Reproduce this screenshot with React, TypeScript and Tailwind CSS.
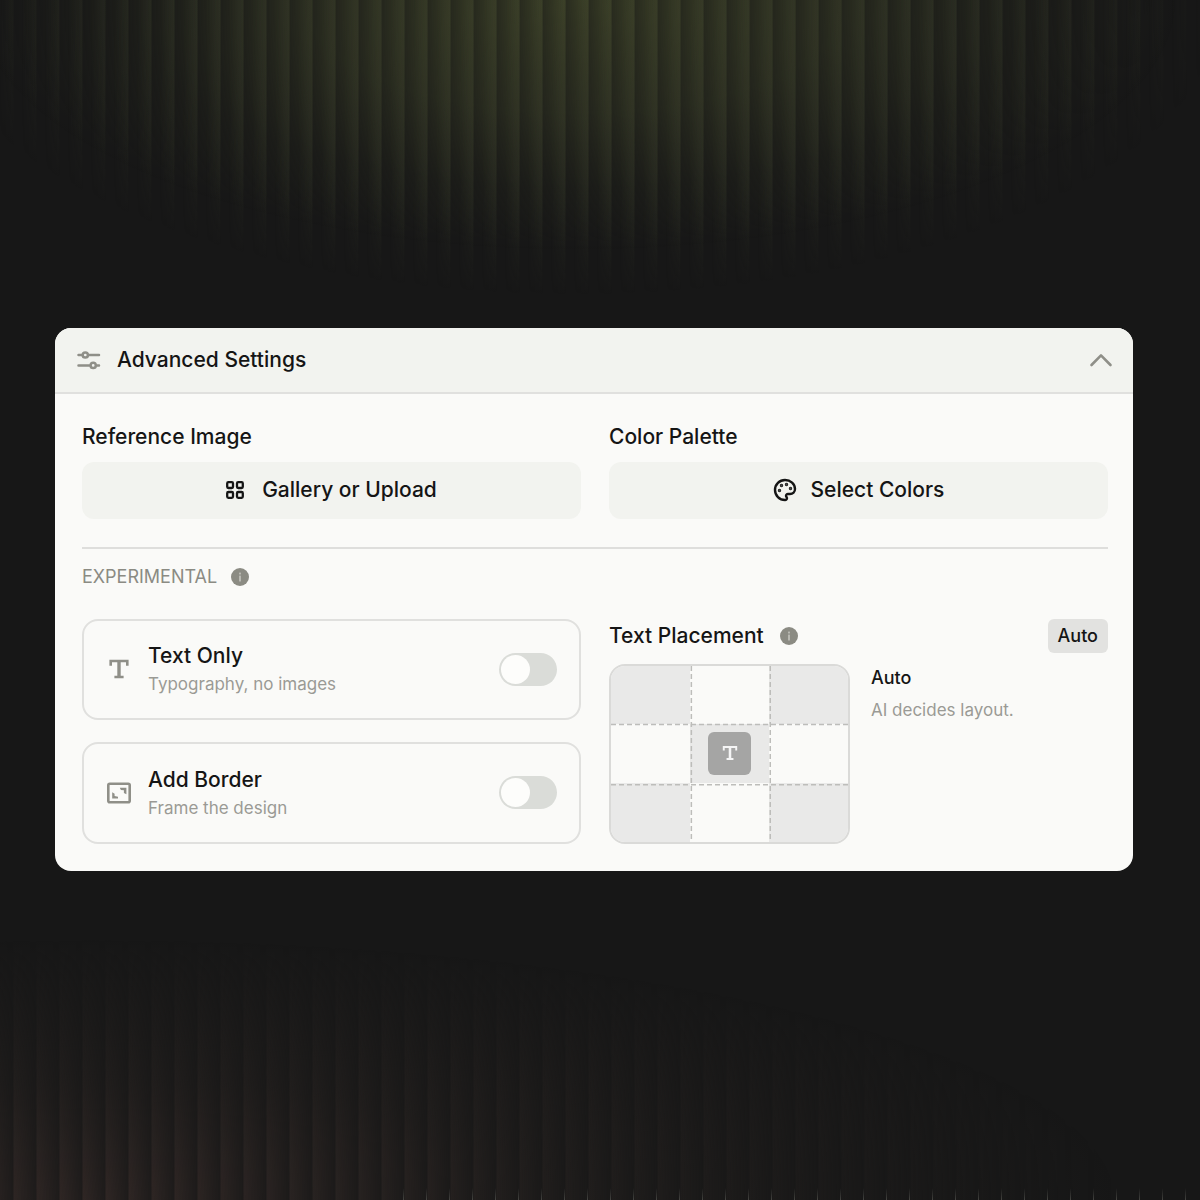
import React, { useState } from "react";
import { Palette } from "lucide-react";

const SlidersIcon = () => (
  <svg className="size-6 shrink-0" viewBox="0 0 24 24" fill="none" stroke="currentColor" strokeWidth="2.5" strokeLinecap="round">
    <path d="M1.500 7h3.600M11.500 7H22" />
    <circle cx="8.300" cy="7" r="2.600" />
    <path d="M1.500 17.4h11M20 17.4h2" />
    <circle cx="16.200" cy="17.4" r="2.600" />
  </svg>
);

const ChevronUpIcon = () => (
  <svg className="size-6 shrink-0" viewBox="0 0 24 24" fill="none" stroke="currentColor" strokeWidth="2.6" strokeLinecap="round" strokeLinejoin="round">
    <path d="M2.500 17 12 7.400 21.500 17" />
  </svg>
);

const GridIcon = () => (
  <svg className="size-[18px] shrink-0" viewBox="0 0 18 18" fill="none" stroke="currentColor" strokeWidth="2.300">
    <rect x="1.200" y="1.200" width="5.800" height="5.800" rx="1.200" />
    <rect x="11" y="1.200" width="5.800" height="5.800" rx="1.200" />
    <rect x="1.200" y="11" width="5.800" height="5.800" rx="1.200" />
    <rect x="11" y="11" width="5.800" height="5.800" rx="1.200" />
  </svg>
);

const InfoIcon = () => (
  <svg className="size-[18px] shrink-0 text-[#8b8b83]" viewBox="0 0 18 18">
    <circle cx="9" cy="9" r="9" fill="currentColor" />
    <rect x="8" y="7.600" width="2" height="6" rx="0.500" fill="#b9b9b2" />
    <rect x="8" y="4.400" width="2" height="2" rx="0.500" fill="#b9b9b2" />
  </svg>
);

const TypeIcon = ({ className }: { className: string }) => (
  <svg className={className} viewBox="0 0 24 24" fill="none" stroke="currentColor">
    <path strokeWidth="2.600" d="M3.700 8.800V4h16.600v4.800M7.400 20h9.200" />
    <path strokeWidth="3.400" d="M12 4v16" />
  </svg>
);

const FrameIcon = () => (
  <svg className="h-[22px] w-6" viewBox="0 0 24 22" fill="none">
    <rect x="1.300" y="1.800" width="21.400" height="18.400" rx="1.500" stroke="currentColor" strokeWidth="2.600" />
    <path d="M12.800 5.800h6.600v6.400l-2.500-1.200V8.300l-3-.4zM5.200 10.200l2.400 1.600v2.300l3.400.6v1.800H5.200z" fill="currentColor" />
  </svg>
);

type OptionCardProps = {
  id: string;
  icon: React.ReactNode;
  title: string;
  description: string;
};

const OptionCard = ({ id, icon, title, description }: OptionCardProps) => {
  const [enabled, setEnabled] = useState(false);

  return (
    <label
      htmlFor={id}
      className="flex flex-1 cursor-pointer items-center rounded-2xl border-2 border-[#e0e0de] pr-[22px] pl-[23px]"
    >
      <span className="flex w-6 justify-center text-[#8f8f88]">{icon}</span>
      <span className="ml-[17px] flex-1 pt-[2px]">
        <span className="block text-[21px] leading-7 font-medium text-[#151515]">{title}</span>
        <span className="block text-[17px] leading-7 text-[#9a9a95]">{description}</span>
      </span>
      <input
        id={id}
        type="checkbox"
        role="switch"
        checked={enabled}
        onChange={e => setEnabled(e.target.checked)}
        className="relative h-[33px] w-[58px] cursor-pointer appearance-none rounded-full bg-[#dadcd8] before:absolute before:top-[2px] before:left-[2px] before:size-[29px] before:rounded-full before:bg-[#fdfdfb] checked:bg-[#8b8b83] checked:before:translate-x-[25px]"
      />
    </label>
  );
};

const positions = [
  "Top left", "Top", "Top right",
  "Left", "Center", "Right",
  "Bottom left", "Bottom", "Bottom right",
];

const PlacementGrid = () => (
  <div className="relative grid h-[180px] w-[241px] shrink-0 grid-cols-3 grid-rows-3 overflow-hidden rounded-2xl border-2 border-[#dadad8]">
    {positions.map((position, i) => (
      <button
        key={position}
        type="button"
        aria-label={position}
        className={`flex items-center justify-center ${i % 2 === 0 ? "bg-[#e9e9e8]" : "bg-[#fafaf8]"}`}
      >
        {position === "Center" && (
          <span className="flex size-[43px] items-center justify-center rounded-md bg-[#a5a5a4] text-[#f5f5f5]">
            <TypeIcon className="size-[18px]" />
          </span>
        )}
      </button>
    ))}
    <svg className="pointer-events-none absolute inset-0 size-full" stroke="#bdbdba" strokeWidth="1.500" strokeDasharray="5 3">
      <line x1="33.900%" y1="0" x2="33.900%" y2="100%" />
      <line x1="67.200%" y1="0" x2="67.200%" y2="100%" />
      <line x1="0" y1="33.300%" x2="100%" y2="33.300%" />
      <line x1="0" y1="67.500%" x2="100%" y2="67.500%" />
    </svg>
  </div>
);

// Reeded glass: soft glows cut into vertical ribs
const Backdrop = () => (
  <div aria-hidden="true" className="pointer-events-none absolute inset-0 overflow-hidden">
    <div className="absolute inset-x-0 top-0 h-[320px] bg-[radial-gradient(ellipse_50%_78%_at_48%_0%,#3d4228_0%,#373b26c0_45%,#2c2f2060_75%,transparent_100%)] [mask-image:repeating-linear-gradient(90deg,rgba(0,0,0,0.5)_0px,black_22px,rgba(0,0,0,0.5)_23px)] [mask-position:-9px_0] [mask-size:1219px_100%]" />
    <div className="absolute inset-x-0 top-0 h-[320px] bg-[radial-gradient(ellipse_54%_92%_at_48%_0%,#3c402b60_0%,#30332780_60%,transparent_100%)] [mask-image:repeating-linear-gradient(90deg,transparent_0px,transparent_8px,black_22px,transparent_23px)] [mask-position:-9px_0] [mask-size:1219px_100%]" />
    <div className="absolute inset-x-0 bottom-0 h-[260px] bg-[radial-gradient(ellipse_85%_100%_at_8%_100%,#302725_0%,#28232199_45%,transparent_100%)] [mask-image:repeating-linear-gradient(90deg,rgba(0,0,0,0.3)_0px,black_1px,rgba(0,0,0,0.3)_23px)] [mask-position:-10px_0] [mask-size:1219px_100%]" />
    <div className="absolute right-0 bottom-0 left-[403px] h-3 bg-[repeating-linear-gradient(90deg,#66666090_0px,#66666090_1px,transparent_1px,transparent_23px)] [mask-image:linear-gradient(to_top,black,transparent)]" />
  </div>
);

const App = () => {
  const [open, setOpen] = useState(true);

  return (
    <main className="relative flex min-h-screen items-center bg-[#171717] pr-[67px] pb-[2px] pl-[55px] font-['Inter',sans-serif] text-[#151515]">
      <Backdrop />
      <section className="relative w-full overflow-hidden rounded-2xl bg-[#fafaf8]">
        <button
          type="button"
          aria-expanded={open}
          onClick={() => setOpen(!open)}
          className="flex h-[66px] w-full items-center border-b-2 border-[#e0e0de] bg-[#f2f3ef] pr-5 pl-[22px] text-[#8f8f88]"
        >
          <SlidersIcon />
          <span className="ml-4 flex-1 text-left text-[21px] font-medium text-[#151515]">Advanced Settings</span>
          <ChevronUpIcon />
        </button>

        {open && (
          <div className="pt-[27px] pr-[25px] pb-[27px] pl-[27px]">
            <div className="grid grid-cols-2 gap-7 text-[21px] font-medium">
              <div>
                <h3 className="leading-8">Reference Image</h3>
                <button type="button" className="mt-[9px] flex h-[57px] w-full items-center justify-center gap-[18px] rounded-xl bg-[#f2f3ef]">
                  <GridIcon />
                  Gallery or Upload
                </button>
              </div>
              <div>
                <h3 className="leading-8">Color Palette</h3>
                <button type="button" className="mt-[9px] flex h-[57px] w-full items-center justify-center gap-[14px] rounded-xl bg-[#f2f3ef]">
                  <Palette className="size-6" strokeWidth={2.4} />
                  Select Colors
                </button>
              </div>
            </div>

            <hr className="mt-7 border-t-2 border-[#dededc]" />

            <div className="mt-[14px] flex items-center gap-[14px]">
              <h4 className="text-lg leading-7 text-[#8b8b83]">EXPERIMENTAL</h4>
              <InfoIcon />
            </div>

            <div className="mt-7 grid grid-cols-2 gap-7">
              <div className="flex flex-col gap-[22px]">
                <OptionCard
                  id="text-only"
                  icon={<TypeIcon className="size-6" />}
                  title="Text Only"
                  description="Typography, no images"
                />
                <OptionCard
                  id="add-border"
                  icon={<FrameIcon />}
                  title="Add Border"
                  description="Frame the design"
                />
              </div>

              <div>
                <div className="flex items-center">
                  <h3 className="text-[21px] leading-8 font-medium">Text Placement</h3>
                  <span className="ml-4">
                    <InfoIcon />
                  </span>
                  <button type="button" className="ml-auto h-[34px] rounded-md bg-[#e2e2e0] px-[10px] text-lg font-medium">
                    Auto
                  </button>
                </div>
                <div className="mt-[11px] flex gap-[21px]">
                  <PlacementGrid />
                  <div>
                    <p className="text-lg leading-7 font-medium">Auto</p>
                    <p className="mt-1 text-[17px] leading-7 text-[#9a9a95]">AI decides layout.</p>
                  </div>
                </div>
              </div>
            </div>
          </div>
        )}
      </section>
    </main>
  );
};

export default App;
